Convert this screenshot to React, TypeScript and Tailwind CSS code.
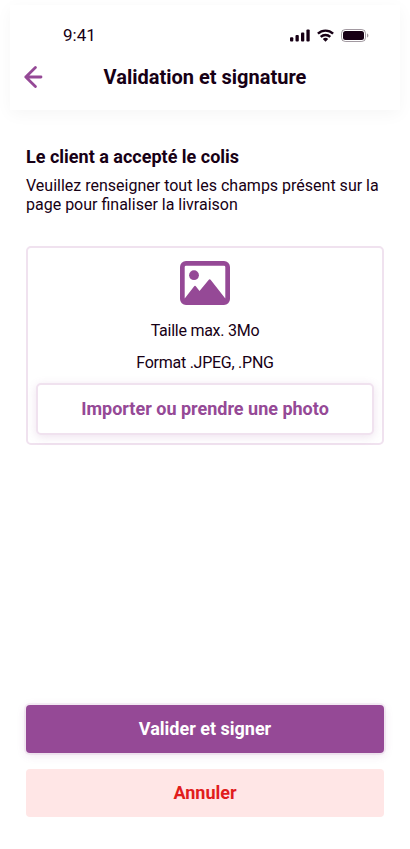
function SignalIcon() {
  return (
    <svg width="20" height="13" viewBox="0 0 20 13" fill="currentColor">
      <rect x="0" y="8.3" width="3.3" height="4.2" rx="1" />
      <rect x="5.5" y="6" width="3.3" height="6.5" rx="1" />
      <rect x="11" y="3.5" width="3.3" height="9" rx="1" />
      <rect x="16.4" y="0.5" width="3.3" height="12" rx="1" />
    </svg>
  )
}

function WifiIcon() {
  return (
    <svg width="17" height="13" viewBox="0 0 17 13" fill="none" stroke="currentColor" strokeWidth="2.4">
      <path d="M0.9 4.700a11 11 0 0 1 15.2 0" />
      <path d="M3.700 7.900a7 7 0 0 1 9.600 0" />
      <path d="M8.5 12.700 5.8 10a3.900 3.900 0 0 1 5.400 0Z" fill="currentColor" stroke="none" />
    </svg>
  )
}

function BatteryIcon() {
  return (
    <svg width="28" height="13" viewBox="0 0 28 13" fill="currentColor">
      <rect x="0.5" y="0.5" width="24" height="12" rx="3.8" fill="none" stroke="currentColor" strokeOpacity="0.4" />
      <rect x="2" y="2" width="21" height="9" rx="2.5" />
      <path d="M26 4.5v4c.8-.3 1.4-1.1 1.4-2s-.6-1.700-1.400-2Z" opacity="0.4" />
    </svg>
  )
}

function StatusBar() {
  return (
    <div className="flex items-center justify-between h-[19px] pl-[53px] pr-[31px]">
      <span className="text-[17px] leading-[19px]">9:41</span>
      <div className="flex items-center">
        <SignalIcon />
        <span className="w-[7px]" />
        <WifiIcon />
        <span className="w-[7px]" />
        <BatteryIcon />
      </div>
    </div>
  )
}

export default function App() {
  return (
    <div
      className="w-[410px] h-[849px] px-[10px] pt-[5px] bg-white text-[#170015] overflow-hidden"
      style={{ fontFamily: 'Roboto, sans-serif' }}
    >
      <div className="flex flex-col h-[844px]">
        {/* Header */}
        <header className="h-[105px] pt-[21px] shadow-[0_4px_16px_rgba(0,0,0,0.04)]">
          <StatusBar />
          <div className="relative flex items-center justify-center h-6 mt-5">
            <button className="absolute left-[14px] top-0" aria-label="Retour">
              <svg width="20" height="24" viewBox="0 0 20 24" fill="none" stroke="#954996" strokeWidth="2.8" strokeLinecap="round" strokeLinejoin="round">
                <path d="M17 12H1.800M11.400 2.600 1.800 12l9.600 9.400" />
              </svg>
            </button>
            <h1 className="text-[20px] leading-6 font-bold">Validation et signature</h1>
          </div>
        </header>

        <main className="flex flex-col flex-1 px-4 pt-[36px] pb-8">
          <h2 className="text-lg leading-[21px] font-bold">Le client a accepté le colis</h2>
          <p className="mt-[9px] text-base leading-[19px]">
            Veuillez renseigner tout les champs présent sur la page pour finaliser la livraison
          </p>

          {/* Photo upload */}
          <section className="flex flex-col items-center h-[199px] mt-8 px-2 pt-[13px] pb-2 border-2 border-[#f0e2ef] rounded-[5px]">
            <svg width="50" height="44" viewBox="0 0 50 44" fill="#954996">
              <path fillRule="evenodd" d="M6 0h38a6 6 0 0 1 6 6v32a6 6 0 0 1-6 6H6a6 6 0 0 1-6-6V6a6 6 0 0 1 6-6Zm0 4.700a1.300 1.300 0 0 0-1.300 1.300v31.500L14 25.400a1.300 1.300 0 0 1 2 0l3.500 4.500L28.600 19a1.400 1.400 0 0 1 2.200 0l14.500 18.500V6A1.300 1.300 0 0 0 44 4.700Z" />
              <circle cx="14" cy="14.200" r="4.900" />
            </svg>
            <span className="mt-4 text-base leading-[19px] tracking-[-0.26px]">Taille max. 3Mo</span>
            <span className="mt-[13px] text-base leading-[19px] tracking-[-0.26px]">Format .JPEG, .PNG</span>
            <button className="w-full h-[52px] mt-auto bg-white border-2 border-[#f0e2ef] rounded-[5px] shadow-[0_2px_10px_rgba(149,73,150,0.16)] text-lg font-bold text-[#954996]">
              Importer ou prendre une photo
            </button>
          </section>

          {/* Actions */}
          <div className="flex flex-col gap-4 mt-auto">
            <button className="h-12 rounded bg-[#954996] text-lg font-bold text-white shadow-[0_0_0_2px_rgba(149,73,150,0.08),0_2px_10px_rgba(149,73,150,0.16)]">
              Valider et signer
            </button>
            <button className="h-12 rounded bg-[#ffe6e6] text-lg font-bold text-[#e11d1d]">
              Annuler
            </button>
          </div>
        </main>
      </div>
    </div>
  )
}
